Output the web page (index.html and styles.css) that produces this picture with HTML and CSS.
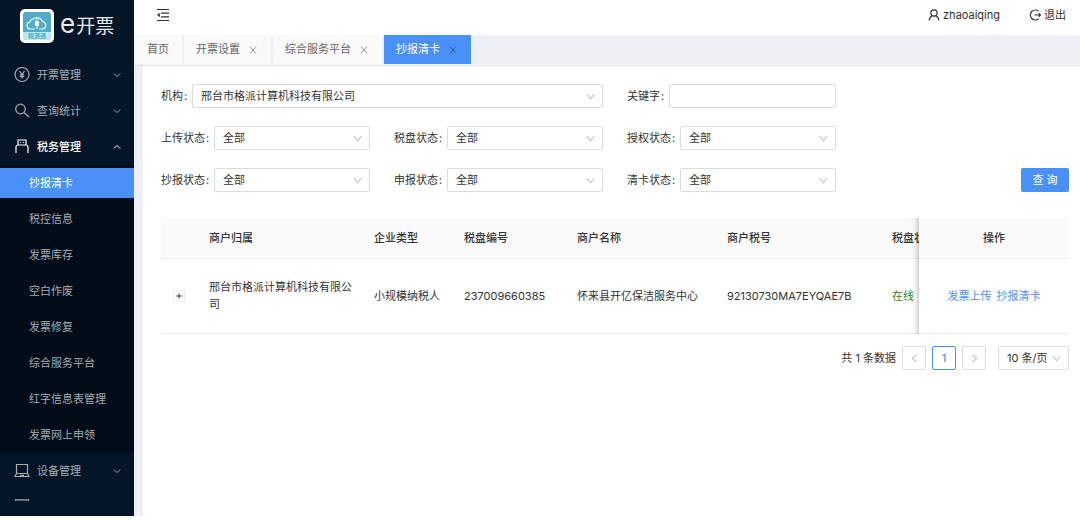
FILE: index.html
```html
<!DOCTYPE html>
<html lang="zh-CN">
<head>
<meta charset="utf-8">
<meta name="viewport" content="width=device-width, initial-scale=1">
<title>e开票 - 抄报清卡</title>
<link rel="stylesheet" href="styles.css">
</head>
<body>
<svg class="sprite" aria-hidden="true">
  <symbol id="i-down" viewBox="0 0 10 10"><path d="M1 2.5l4 5 4-5" /></symbol>
  <symbol id="i-caret" viewBox="0 0 10 10"><path d="M1 3l4 4 4-4" /></symbol>
  <symbol id="i-close" viewBox="0 0 10 10"><path d="M2 1.500l6 7M8 1.500l-6 7" /></symbol>
</svg>
<div class="shell">
  <aside class="sider">
    <div class="brand">
      <svg class="brand-mark" viewBox="0 0 34 34" role="img" aria-label="logo">
        <rect x="0" y="0" width="34" height="34" rx="5" fill="#fff"/>
        <rect x="3" y="3" width="28" height="28" rx="3" fill="#52acc4"/>
        <path d="M3 23h28v5a3 3 0 0 1-3 3H6a3 3 0 0 1-3-3z" fill="#b9eaf5"/>
        <path d="M15 20h-4.500a3.500 3.500 0 0 1-.8-6.900 4 4 0 0 1 3.300-3 6 6 0 0 1 9.500 2.300 4 4 0 0 1 .8 7.600H19" fill="none" stroke="#e4f8fb" stroke-width="1.200"/>
        <path d="M17 9v11" fill="none" stroke="#e4f8fb" stroke-width="1"/>
        <rect x="15" y="12" width="4" height="5" rx="1" fill="#fff"/>
        <text x="17" y="29" class="brand-tag" text-anchor="middle">税源通</text>
      </svg>
      <span class="brand-name"><span class="brand-e">e</span>开票</span>
    </div>
    <nav class="menu">
      <a class="menu-item" href="#"><svg class="icon" viewBox="0 0 16 16"><circle cx="8" cy="7.500" r="7"/><path d="M5.500 4L8 7.500 10.500 4M8 7.500v4M5.800 7.800h4.400M5.800 9.700h4.400"/></svg><span>开票管理</span><svg class="caret"><use href="#i-caret"/></svg></a>
      <a class="menu-item" href="#"><svg class="icon" viewBox="0 0 16 16"><circle cx="6.500" cy="6" r="4.800"/><path d="M10 9.500l5 4.500"/></svg><span>查询统计</span><svg class="caret"><use href="#i-caret"/></svg></a>
      <a class="menu-item open" href="#"><svg class="icon" viewBox="0 0 16 16"><path d="M2 14V8a2 2 0 0 1 2-2h8a2 2 0 0 1 2 2v6M4 6V1h8v5M6.500 3v1M9.500 3v1"/></svg><span>税务管理</span><svg class="caret up"><use href="#i-caret"/></svg></a>
      <div class="submenu">
        <a class="sub-item active" href="#">抄报清卡</a>
        <a class="sub-item" href="#">税控信息</a>
        <a class="sub-item" href="#">发票库存</a>
        <a class="sub-item" href="#">空白作废</a>
        <a class="sub-item" href="#">发票修复</a>
        <a class="sub-item" href="#">综合服务平台</a>
        <a class="sub-item" href="#">红字信息表管理</a>
        <a class="sub-item" href="#">发票网上申领</a>
      </div>
      <a class="menu-item" href="#"><svg class="icon" viewBox="0 0 16 16"><path d="M2.500 10.500v-9h11v9M1 13.500l1.500-3h11l1.500 3zM6 12.300h4"/></svg><span>设备管理</span><svg class="caret"><use href="#i-caret"/></svg></a>
      <a class="menu-item" href="#" aria-label="更多"><svg class="icon" viewBox="0 0 16 16"><path d="M1.500 13V.8h13V13z"/></svg></a>
    </nav>
  </aside>
  <div class="main">
    <header class="topbar">
      <button class="icon-btn" type="button" aria-label="收起菜单"><svg viewBox="0 0 14 14"><path d="M1 1.500h12M5 5.200h8M5 8.800h8M1 12.500h12"/><path class="solid" d="M3.800 4.800v4.400L1 7z"/></svg></button>
      <div class="account">
        <a class="top-link" href="#"><svg viewBox="0 0 12 12"><circle cx="6" cy="4" r="3.200"/><path d="M1.200 11.500C1.400 8.800 3 7.200 4.500 6.800M10.800 11.500C10.600 8.800 9 7.200 7.500 6.800"/></svg>zhaoaiqing</a>
        <a class="top-link" href="#"><svg viewBox="0 0 12 12"><path d="M9.800 2.400A5 5 0 1 0 9.800 9.600M5.500 6h6M9.700 4.300L11.500 6 9.700 7.700"/></svg>退出</a>
      </div>
    </header>
    <nav class="tabs">
      <a class="tab" href="#">首页</a>
      <div class="tab"><a href="#">开票设置</a><button type="button" aria-label="关闭"><svg><use href="#i-close"/></svg></button></div>
      <div class="tab"><a href="#">综合服务平台</a><button type="button" aria-label="关闭"><svg><use href="#i-close"/></svg></button></div>
      <div class="tab current"><a href="#">抄报清卡</a><button type="button" aria-label="关闭"><svg><use href="#i-close"/></svg></button></div>
    </nav>
    <main class="content">
      <form class="filters">
        <div class="field wide"><label for="org">机构</label><span class="select"><select id="org"><option>邢台市格派计算机科技有限公司</option></select><svg><use href="#i-down"/></svg></span></div>
        <div class="field"><label for="key">关键字</label><input class="text" id="key" type="text"></div>
        <div class="field first"><label for="s1">上传状态</label><span class="select"><select id="s1"><option>全部</option></select><svg><use href="#i-down"/></svg></span></div>
        <div class="field"><label for="s2">税盘状态</label><span class="select"><select id="s2"><option>全部</option></select><svg><use href="#i-down"/></svg></span></div>
        <div class="field"><label for="s3">授权状态</label><span class="select"><select id="s3"><option>全部</option></select><svg><use href="#i-down"/></svg></span></div>
        <div class="field first"><label for="s4">抄报状态</label><span class="select"><select id="s4"><option>全部</option></select><svg><use href="#i-down"/></svg></span></div>
        <div class="field"><label for="s5">申报状态</label><span class="select"><select id="s5"><option>全部</option></select><svg><use href="#i-down"/></svg></span></div>
        <div class="field"><label for="s6">清卡状态</label><span class="select"><select id="s6"><option>全部</option></select><svg><use href="#i-down"/></svg></span></div>
        <button class="submit" type="button">查 询</button>
      </form>
      <div class="table-wrap">
        <table class="table">
          <colgroup><col class="c-expand"><col class="c-owner"><col class="c-type"><col class="c-disk"><col class="c-name"><col class="c-tax"><col class="c-state"><col class="c-action"></colgroup>
          <thead><tr><th></th><th>商户归属</th><th>企业类型</th><th>税盘编号</th><th>商户名称</th><th>商户税号</th><th>税盘状态</th><th class="pinned">操作</th></tr></thead>
          <tbody><tr><td class="expand-cell"><button class="expand" type="button" aria-label="展开"><svg viewBox="0 0 10 10"><path d="M5 1.500v7M1.500 5h7"/></svg></button></td><td>邢台市格派计算机科技有限公司</td><td>小规模纳税人</td><td>237009660385</td><td>怀来县开亿保洁服务中心</td><td>92130730MA7EYQAE7B</td><td class="online">在线</td><td class="pinned"><span class="actions"><a href="#">发票上传</a><a href="#">抄报清卡</a></span></td></tr></tbody>
        </table>
      </div>
      <div class="pager">
        <span>共 1 条数据</span>
        <button class="page" type="button" aria-label="上一页"><svg class="left"><use href="#i-down"/></svg></button>
        <button class="page on" type="button">1</button>
        <button class="page" type="button" aria-label="下一页"><svg class="right"><use href="#i-down"/></svg></button>
        <span class="select size"><select aria-label="每页条数"><option>10 条/页</option></select><svg><use href="#i-down"/></svg></span>
      </div>
    </main>
  </div>
</div>
</body>
</html>
```
FILE: styles.css
```css
* { box-sizing: border-box; }
body { margin: 0; background: #fff; color: #333; font: 11px/17px Inter, "Noto Sans CJK SC", sans-serif; }
a { color: inherit; text-decoration: none; }
button, select, input { font: inherit; color: inherit; margin: 0; padding: 0; border: 0; background: none; }
button { cursor: pointer; }
svg { display: block; fill: none; stroke: currentColor; stroke-width: 1.2; flex: none; }
.sprite { position: absolute; width: 0; height: 0; }

.shell { display: flex; height: calc(100vh - 4px); min-height: 300px; }

.sider { width: 134px; flex: none; display: flex; flex-direction: column; padding-bottom: 15px; background: #041527; color: #a6adb4; }
.brand { display: flex; align-items: center; gap: 6px; height: 57px; padding: 0 0 6px 20px; flex: none; color: #e8eaec; }
.brand-mark { width: 34px; height: 34px; stroke: none; }
.brand-tag { font-size: 6px; font-weight: 700; fill: #52acc4; }
.brand-name { display: flex; align-items: baseline; gap: 1px; font-size: 19px; line-height: 28px; white-space: nowrap; }
.brand-e { font-size: 26px; }
.menu { flex: 1; min-height: 0; overflow: hidden; }
.menu-item { display: flex; align-items: center; gap: 7px; height: 36px; padding: 0 13px 0 14px; }
.menu-item .icon { width: 16px; height: 16px; }
.menu-item.open { color: #fff; font-weight: 500; }
.caret { width: 8px; height: 8px; margin-left: auto; }
.caret.up { transform: rotate(180deg); }
.submenu { display: flex; flex-direction: column; gap: 6px; padding: 3px 0; background: #000c17; }
.sub-item { height: 30px; line-height: 30px; padding-left: 29px; }
.sub-item.active { background: #4a91f7; color: #fff; }

.main { flex: 1; min-width: 0; display: flex; flex-direction: column; background: #eff0f5; }
.topbar { display: flex; align-items: center; justify-content: space-between; height: 35px; padding: 0 14px 6px 22px; background: #fff; flex: none; }
.icon-btn svg { width: 14px; height: 14px; }
.icon-btn .solid { fill: currentColor; stroke: none; }
.account { display: flex; gap: 29px; padding-top: 1px; }
.top-link { display: flex; align-items: center; gap: 3px; }
.top-link svg { width: 12px; height: 12px; }

.tabs { display: flex; gap: 2px; height: 31px; padding: 0 0 1px 1px; border-bottom: 1px solid #e4e5ea; flex: none; }
.tab { display: flex; align-items: center; gap: 8px; padding: 0 13px 0 12px; background: #fafafa; color: #666; }
.tab button { color: #999; }
.tab svg { width: 10px; height: 10px; stroke-width: 1; }
.tab.current { background: #4a91f7; color: #fff; }
.tab.current button { color: #2c5a9e; }

.content { flex: 1; min-height: 0; margin-left: 9px; padding: 18px 11px 0 18px; background: #fff; }
.filters { display: grid; grid-template-columns: repeat(4, minmax(0, 1fr)); gap: 18px 24px; }
.field { display: flex; align-items: center; }
.field.wide { grid-column: span 2; }
.field.first { grid-column: 1; }
.field label { display: flex; white-space: nowrap; }
.field label::after { content: ":"; width: 8px; padding-left: 1px; }
.select { position: relative; display: flex; flex: 1; min-width: 0; }
.select select, .text { width: 100%; height: 24px; border: 1px solid #dcdcdc; border-radius: 2px; background: #fff; appearance: none; padding: 0 8px; outline: none; }
.text { flex: 1; min-width: 0; }
.select svg { position: absolute; right: 8px; top: 8px; width: 9px; height: 9px; color: #bbb; pointer-events: none; }
.submit { justify-self: end; width: 48px; height: 24px; border-radius: 2px; background: #4a91f7; color: #fff; }

.table-wrap { margin-top: 26px; overflow: hidden; }
.table { width: 100%; min-width: 961px; table-layout: fixed; border-collapse: separate; border-spacing: 0; }
.c-expand { width: 38px; }
.c-owner, .c-tax { width: 165px; }
.c-type, .c-state { width: 90px; }
.c-disk { width: 113px; }
.c-name, .c-action { width: 150px; }
.table th, .table td { padding: 0 10px; text-align: left; border-bottom: 1px solid #ececec; }
.table th { height: 41px; background: #fafafa; font-weight: 500; white-space: nowrap; }
.table td { height: 75px; background: #fff; }
.table .pinned { position: sticky; right: 0; text-align: center; }
.pinned::before { content: ""; position: absolute; top: 0; bottom: -1px; left: -8px; width: 8px; background: linear-gradient(to left, rgba(0, 0, 0, 0.18), rgba(0, 0, 0, 0.04) 50%, transparent); }
.table .online { color: #2b8a1f; }
.expand { display: flex; align-items: center; justify-content: center; width: 12px; height: 12px; margin-left: 2px; border: 1px solid #ececec; }
.expand svg { width: 8px; height: 8px; }
.actions { display: inline-flex; gap: 5px; color: #4a91f7; }

.pager { display: flex; align-items: center; justify-content: flex-end; gap: 6px; margin-top: 12px; }
.page { display: flex; align-items: center; justify-content: center; width: 24px; height: 24px; border: 1px solid #dcdcdc; border-radius: 2px; color: #bbb; }
.page svg { width: 9px; height: 9px; }
.page.on { border-color: #4a91f7; color: #4a91f7; font-weight: 500; }
.left { transform: rotate(90deg); }
.right { transform: rotate(-90deg); }
.select.size { flex: none; width: 71px; margin-left: 6px; }
```
